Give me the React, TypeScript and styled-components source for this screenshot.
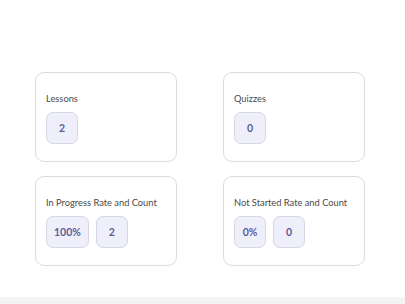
import React from 'react';
import styled, { createGlobalStyle } from 'styled-components';

const GlobalStyle = createGlobalStyle`
  html, body {
    margin: 0;
    padding: 0;
    background: #ffffff;
  }
  body {
    font-family: Lato, "Noto Sans", sans-serif;
  }
`;

const Page = styled('div')`
  width: 405px;
  height: 304px;
  display: flex;
  flex-direction: column;
  overflow: hidden;
`;

const Content = styled('main')`
  flex: 1;
  padding: 72px 0 0 35px;
`;

const StatsGrid = styled('div')`
  display: grid;
  grid-template-columns: 142px 142px;
  column-gap: 46px;
  row-gap: 14px;
`;

const Card = styled('section')`
  box-sizing: border-box;
  height: 90px;
  border: 1px solid #dcdce0;
  border-radius: 9px;
  padding: 20px 10px 0;
  display: flex;
  flex-direction: column;
  gap: 7px;
`;

const Title = styled('h3')`
  margin: 0;
  font-size: 9.3px;
  font-weight: 400;
  color: #4a4a4a;
  line-height: 12px;
`;

const Badges = styled('div')`
  display: flex;
  gap: 7px;
`;

const Badge = styled('span')<{ $wide?: boolean }>`
  box-sizing: border-box;
  min-width: 32px;
  height: 32px;
  padding: 0 ${(p) => (p.$wide ? '7px' : '0')};
  display: flex;
  align-items: center;
  justify-content: center;
  background: #efeffb;
  border: 1px solid #d6d6e4;
  border-radius: 7px;
  font-size: 10.5px;
  font-weight: 700;
  color: #5c5c98;
`;

const Footer = styled('footer')`
  height: 7px;
  background: #f4f4f4;
`;

type Stat = { title: string; values: string[] };

const stats: Stat[] = [
  { title: 'Lessons', values: ['2'] },
  { title: 'Quizzes', values: ['0'] },
  { title: 'In Progress Rate and Count', values: ['100%', '2'] },
  { title: 'Not Started Rate and Count', values: ['0%', '0'] },
];

function App() {
  return (
    <Page>
      <GlobalStyle />
      <Content>
        <StatsGrid>
          {stats.map((s) => (
            <Card key={s.title}>
              <Title>{s.title}</Title>
              <Badges>
                {s.values.map((v, i) => (
                  <Badge key={i} $wide={v.includes('%')}>
                    {v}
                  </Badge>
                ))}
              </Badges>
            </Card>
          ))}
        </StatsGrid>
      </Content>
      <Footer />
    </Page>
  );
}

export default App;
